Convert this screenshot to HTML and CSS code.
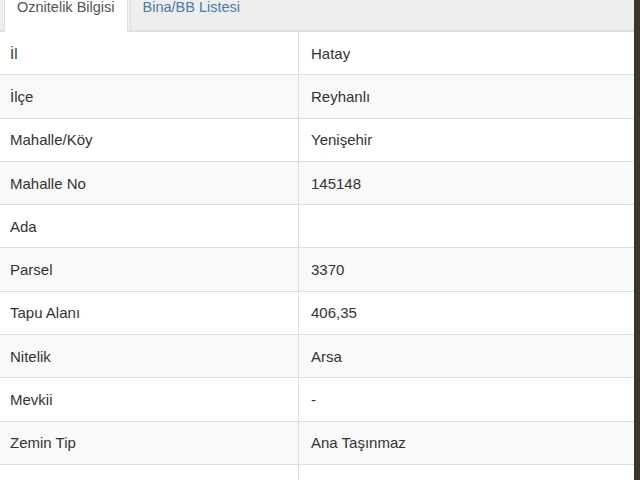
FILE: index.html
```html
<!DOCTYPE html>
<html lang="tr">
<head>
    <meta charset="UTF-8">
    <title>Öznitelik Bilgisi</title>
    <link rel="stylesheet" href="styles.css">
</head>
<body>
    <div class="page">
        <ul class="tabs">
            <li class="tab active">Oznitelik Bilgisi</li>
            <li class="tab">Bina/BB Listesi</li>
        </ul>
        <table class="info-table">
            <tr><td>İl</td><td>Hatay</td></tr>
            <tr><td>İlçe</td><td>Reyhanlı</td></tr>
            <tr><td>Mahalle/Köy</td><td>Yenişehir</td></tr>
            <tr><td>Mahalle No</td><td>145148</td></tr>
            <tr><td>Ada</td><td></td></tr>
            <tr><td>Parsel</td><td>3370</td></tr>
            <tr><td>Tapu Alanı</td><td>406,35</td></tr>
            <tr><td>Nitelik</td><td>Arsa</td></tr>
            <tr><td>Mevkii</td><td>-</td></tr>
            <tr><td>Zemin Tip</td><td>Ana Taşınmaz</td></tr>
            <tr><td>Durum</td><td></td></tr>
        </table>
    </div>
</body>
</html>
```

FILE: styles.css
```css
html, body {
    margin: 0;
    padding: 0;
    height: 100%;
    overflow: hidden;
}

body {
    font-family: "Liberation Sans", Arial, sans-serif;
    font-size: 15px;
    color: #333;
    background-color: #3b362f;
}

.page {
    width: 634px;
    padding-top: 1px;
    background-color: #fff;
}

.tabs {
    list-style: none;
    margin: -12px 0 0 0;
    padding: 0 0 0 4px;
    display: flex;
    gap: 2px;
    background-color: #eee;
    border-bottom: 1px solid #ddd;
    box-shadow: inset 0 -3px 2px -2px #e2e2e2;
    height: 42px;
    font-size: 14.5px;
}

.tab {
    padding: 10px 12px 0 12px;
    color: #4a7bab;
    border-left: 1px solid #ddd;
    border-top-left-radius: 3px;
    margin-bottom: -1px;
}

.tab.active {
    background-color: #fff;
    color: #555;
    border-right: 1px solid #ddd;
    border-bottom: 1px solid #fff;
}

.info-table {
    width: 634px;
    border-collapse: collapse;
    table-layout: fixed;
}

.info-table td {
    height: 42.3px;
    padding: 0 12px;
    border-bottom: 1px solid #ddd;
    vertical-align: middle;
    background-color: #fff;
}

.info-table td:first-child {
    width: 276px;
    padding-left: 10px;
    border-right: 1px solid #ddd;
}

.info-table tr:nth-child(even) td {
    background-color: #f9f9f9;
}
```
